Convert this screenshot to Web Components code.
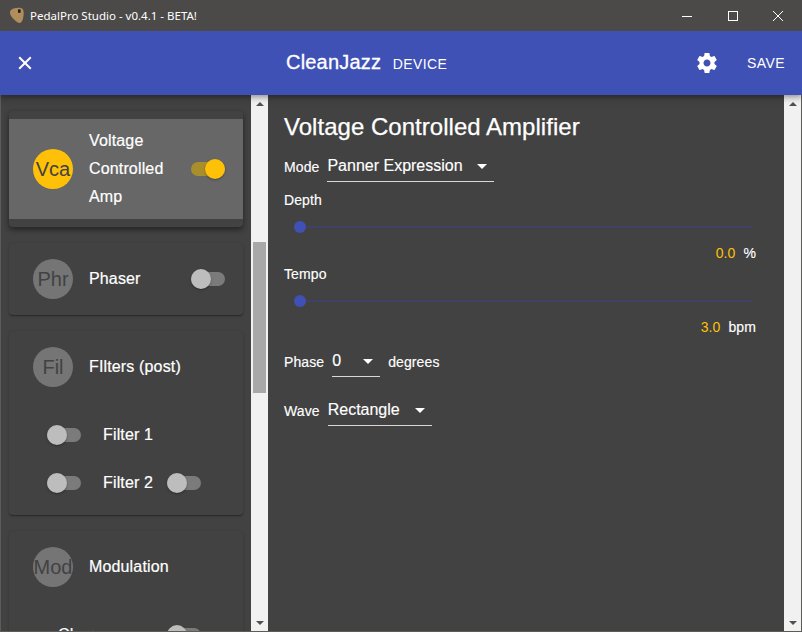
<!DOCTYPE html>
<html>
<head>
<meta charset="utf-8">
<title>PedalPro Studio</title>
<style>
    html, body { margin: 0; height: 100%; background: #424242; overflow: hidden; }
    body { font-family: "Liberation Sans", Arial, sans-serif; }
</style>
</head>
<body>
<app-window>
    <title-bar slot="title">PedalPro Studio - v0.4.1 - BETA!</title-bar>
    <app-bar slot="bar" name="CleanJazz" sub="DEVICE"></app-bar>
    <side-list slot="side">
        <effect-card>
            <effect-row code="Vca" active>Voltage Controlled Amp</effect-row>
        </effect-card>
        <effect-card>
            <effect-row code="Phr" switch>Phaser</effect-row>
        </effect-card>
        <effect-card>
            <effect-row code="Fil">FIlters (post)</effect-row>
            <sub-row>Filter 1</sub-row>
            <sub-row second>Filter 2</sub-row>
        </effect-card>
        <effect-card>
            <effect-row code="Mod">Modulation</effect-row>
            <sub-row plain>Chorus</sub-row>
        </effect-card>
    </side-list>
    <detail-panel slot="main">
        <h-title>Voltage Controlled Amplifier</h-title>
        <form-row label="Mode" value="Panner Expression" width="167" gap="8" top="8"></form-row>
        <param-slider label="Depth" value="0.0" unit="%" top="8"></param-slider>
        <param-slider label="Tempo" value="3.0" unit="bpm" top="0"></param-slider>
        <form-row label="Phase" value="0" width="48" gap="8" top="8" after="degrees"></form-row>
        <form-row label="Wave" value="Rectangle" width="104" gap="8" top="18"></form-row>
    </detail-panel>
</app-window>

<script>
function shadow(el, html) {
    el.attachShadow({mode: "open"}).innerHTML = html;
}

class AppWindow extends HTMLElement {
    connectedCallback() {
        shadow(this, `
            <style>
                :host { display: grid; grid-template-rows: 30px 64px 1fr; height: 632px; box-sizing: border-box; border: 1px solid #5c5c5a; position: relative; }
                .body { display: flex; min-height: 0; }
                .side { display: flex; width: 267px; flex: none; min-height: 0; overflow: hidden; }
                .main { display: flex; flex: 1; min-width: 0; }
                ::slotted([slot=title]), ::slotted([slot=bar]) { margin: 0 -1px; }
                ::slotted([slot=title]) { margin-top: -1px; }
            </style>
            <slot name="title"></slot>
            <slot name="bar"></slot>
            <div class="body">
                <div class="side"><slot name="side"></slot><scroll-bar thumb-top="147" thumb-height="151"></scroll-bar></div>
                <div class="main"><slot name="main"></slot><scroll-bar></scroll-bar></div>
            </div>
        `);
    }
}

class TitleBar extends HTMLElement {
    connectedCallback() {
        shadow(this, `
            <style>
                :host { display: flex; align-items: center; background: #4b4a48; color: #fff; font: 11.5px "Noto Sans", "Open Sans", sans-serif; padding-right: 1px; position: relative; z-index: 2; }
                .logo { width: 16px; height: 17px; margin: 0 5px 0 9px; flex: none; }
                .text { flex: 1; white-space: nowrap; }
                .btn { width: 45.5px; height: 31px; display: flex; align-items: center; justify-content: center; flex: none; }
                svg { display: block; }
            </style>
            <svg class="logo" viewBox="0 0 16 17">
                <path d="M2.6 2.6C5 .8 11 0 13.4 1.8 15.2 3.4 15 9 13.6 13 12.6 15.6 11 16.6 9.4 15.8 6 14 1.4 9.6 1 6 .9 4.6 1.5 3.4 2.6 2.6Z" fill="#b08d5c"/>
                <rect x="9" y="2.4" width="2.6" height="3.4" fill="#1c1c1c"/>
            </svg>
            <span class="text"><slot></slot></span>
            <span class="btn"><svg width="10" height="10" viewBox="0 0 10 10"><path d="M0 5.5H10" stroke="#fff" fill="none"/></svg></span>
            <span class="btn"><svg width="10" height="10" viewBox="0 0 10 10"><rect x=".5" y=".5" width="9" height="9" stroke="#fff" fill="none"/></svg></span>
            <span class="btn"><svg width="10" height="10" viewBox="0 0 10 10"><path d="M0 0L10 10M10 0L0 10" stroke="#fff" stroke-width="1" fill="none"/></svg></span>
        `);
    }
}

class AppBar extends HTMLElement {
    connectedCallback() {
        shadow(this, `
            <style>
                :host { display: flex; align-items: center; background: #3f51b5; color: #fff; padding: 0 17px; position: relative; z-index: 1; box-shadow: 0 2px 4px -1px rgba(0,0,0,.2), 0 4px 5px rgba(0,0,0,.14), 0 1px 10px rgba(0,0,0,.12); }
                svg { display: block; flex: none; }
                .title { position: absolute; left: 286px; top: 20px; display: flex; align-items: baseline; white-space: nowrap; }
                .name { font-size: 20px; font-weight: 500; letter-spacing: .2px; -webkit-text-stroke: .3px #fff; }
                .sub { font-size: 14px; margin-left: 11.6px; letter-spacing: .4px; }
                .right { margin-left: auto; display: flex; align-items: center; }
                .save { font-size: 14px; margin-left: 28px; letter-spacing: .4px; }
            </style>
            <svg width="16" height="16" viewBox="0 0 16 16"><path d="M2.2 2.2L13.8 13.8M13.8 2.2L2.2 13.8" stroke="#fff" stroke-width="2" fill="none"/></svg>
            <div class="title"><span class="name">${this.getAttribute("name")}</span><span class="sub">${this.getAttribute("sub")}</span></div>
            <div class="right">
                <svg width="24" height="24" viewBox="0 0 24 24"><path fill="#fff" d="M19.43 12.98c.04-.32.07-.64.07-.98s-.03-.66-.07-.98l2.11-1.65c.19-.15.24-.42.12-.64l-2-3.46c-.12-.22-.39-.3-.61-.22l-2.49 1c-.52-.4-1.08-.73-1.69-.98l-.38-2.65C14.46 2.18 14.25 2 14 2h-4c-.25 0-.46.18-.49.42l-.38 2.65c-.61.25-1.17.59-1.69.98l-2.49-1c-.23-.09-.49 0-.61.22l-2 3.46c-.13.22-.07.49.12.64l2.11 1.65c-.04.32-.07.65-.07.98s.03.66.07.98l-2.11 1.65c-.19.15-.24.42-.12.64l2 3.46c.12.22.39.3.61.22l2.49-1c.52.4 1.08.73 1.69.98l.38 2.65c.03.24.24.42.49.42h4c.25 0 .46-.18.49-.42l.38-2.65c.61-.25 1.17-.59 1.69-.98l2.49 1c.23.09.49 0 .61-.22l2-3.46c.12-.22.07-.49-.12-.64l-2.11-1.65zM12 15.5c-1.93 0-3.5-1.57-3.5-3.5s1.57-3.5 3.5-3.5 3.5 1.57 3.5 3.5-1.57 3.5-3.5 3.5z"/></svg>
                <span class="save">SAVE</span>
            </div>
        `);
    }
}

class ScrollBar extends HTMLElement {
    connectedCallback() {
        const top = this.getAttribute("thumb-top");
        const height = this.getAttribute("thumb-height");
        shadow(this, `
            <style>
                :host { display: flex; flex-direction: column; width: 17px; flex: none; background: #f1f1f1; position: relative; justify-content: space-between; }
                .arrow { height: 17px; display: flex; align-items: center; justify-content: center; }
                .arrow i { display: block; width: 0; height: 0; border-left: 4px solid transparent; border-right: 4px solid transparent; }
                .up i { border-bottom: 4px solid #505050; }
                .down i { border-top: 4px solid #505050; }
                .thumb { position: absolute; left: 2px; right: 2px; background: #a8a8a8; }
            </style>
            <div class="arrow up"><i></i></div>
            ${top ? `<div class="thumb" style="top:${top}px;height:${height}px"></div>` : ""}
            <div class="arrow down"><i></i></div>
        `);
    }
}

class SideList extends HTMLElement {
    connectedCallback() {
        shadow(this, `
            <style>
                :host { display: flex; flex-direction: column; gap: 16px; flex: 1; min-width: 0; padding: 16px 8px 0 8px; box-sizing: border-box; background: #424242; overflow: hidden; }
            </style>
            <slot></slot>
        `);
    }
}

class EffectCard extends HTMLElement {
    connectedCallback() {
        shadow(this, `
            <style>
                :host { display: block; flex: none; padding: 8px 0; border-radius: 4px; background: #424242; box-shadow: 0 1px 3px rgba(0,0,0,.2), 0 1px 1px rgba(0,0,0,.14), 0 2px 1px -1px rgba(0,0,0,.12); }
                :host(:first-child) { box-shadow: 0 3px 5px rgba(0,0,0,.3), 0 2px 6px rgba(0,0,0,.2); }
            </style>
            <slot></slot>
        `);
    }
}

class ToggleSwitch extends HTMLElement {
    connectedCallback() {
        const on = this.hasAttribute("on");
        shadow(this, `
            <style>
                :host { display: block; width: 34px; height: 20px; flex: none; position: relative; }
                .track { position: absolute; left: 0; right: 0; top: 3px; height: 14px; border-radius: 7px; background: ${on ? "#a98f2c" : "#7b7b7b"}; }
                .thumb { position: absolute; top: 0; width: 20px; height: 20px; border-radius: 50%; ${on ? "right: 0; background: #ffc107;" : "left: 0; background: #bdbdbd;"} box-shadow: 0 1px 3px rgba(0,0,0,.2), 0 1px 1px rgba(0,0,0,.14); }
            </style>
            <div class="track"></div><div class="thumb"></div>
        `);
    }
}

class EffectRow extends HTMLElement {
    connectedCallback() {
        const active = this.hasAttribute("active");
        const hasSwitch = active || this.hasAttribute("switch");
        shadow(this, `
            <style>
                :host { display: flex; align-items: center; min-height: 56px; box-sizing: border-box; padding: 8px 18px 8px 24px; color: #fff; font-size: 16px; line-height: 28px; letter-spacing: .15px; -webkit-text-stroke: .2px #fff; }
                :host([active]) { background: #676767; }
                .avatar { width: 40px; height: 40px; border-radius: 50%; flex: none; overflow: hidden; display: flex; align-items: center; justify-content: center; font-size: 20px; letter-spacing: 0; color: #424242; -webkit-text-stroke: 0; background: ${active ? "#ffc107" : "#757575"}; }
                .text { padding: 0 16px; flex: 1; min-width: 0; }
            </style>
            <div class="avatar">${this.getAttribute("code")}</div>
            <div class="text"><slot></slot></div>
            ${hasSwitch ? `<toggle-switch ${active ? "on" : ""}></toggle-switch>` : ""}
        `);
    }
}

class SubRow extends HTMLElement {
    connectedCallback() {
        const plain = this.hasAttribute("plain");
        const second = this.hasAttribute("second");
        shadow(this, `
            <style>
                :host { display: flex; align-items: center; height: 48px; box-sizing: border-box; padding-left: ${plain ? 158 : 38}px; color: #fff; font-size: 16px; letter-spacing: .15px; -webkit-text-stroke: .2px #fff; position: relative; }
                .label { margin-left: 22px; width: ${second ? "64px" : "auto"}; white-space: nowrap; }
                .plain { position: absolute; left: 49px; }
            </style>
            ${plain
                ? `<span class="plain"><slot></slot></span><toggle-switch></toggle-switch>`
                : `<toggle-switch></toggle-switch><span class="label"><slot></slot></span>${second ? `<toggle-switch></toggle-switch>` : ""}`}
        `);
        if (this.previousElementSibling?.tagName === "EFFECT-ROW") this.style.marginTop = "16px";
    }
}

class DetailPanel extends HTMLElement {
    connectedCallback() {
        shadow(this, `
            <style>
                :host { display: block; flex: 1; min-width: 0; padding: 16px 28px 0 16px; box-sizing: border-box; background: #424242; color: #fff; font-size: 14px; letter-spacing: .1px; -webkit-text-stroke: .15px #fff; }
            </style>
            <slot></slot>
        `);
    }
}

class HTitle extends HTMLElement {
    connectedCallback() {
        shadow(this, `
            <style>
                :host { display: block; font-size: 24px; line-height: 32px; letter-spacing: .03px; white-space: nowrap; -webkit-text-stroke: .25px #fff; }
            </style>
            <slot></slot>
        `);
    }
}

class FormRow extends HTMLElement {
    connectedCallback() {
        const after = this.getAttribute("after");
        shadow(this, `
            <style>
                :host { display: flex; align-items: center; height: 31px; margin-top: ${this.getAttribute("top")}px; white-space: nowrap; }
                .select { width: ${this.getAttribute("width")}px; height: 31px; margin-left: ${this.getAttribute("gap")}px; box-sizing: border-box; border-bottom: 1px solid #d9d9d9; display: flex; align-items: center; font-size: 16px; letter-spacing: 0; position: relative; }
                .arrow { position: absolute; right: 7px; top: 13px; width: 0; height: 0; border-left: 5px solid transparent; border-right: 5px solid transparent; border-top: 5px solid #fff; }
                .after { margin-left: 8px; }
            </style>
            <span>${this.getAttribute("label")}</span>
            <div class="select"><span>${this.getAttribute("value")}</span><i class="arrow"></i></div>
            ${after ? `<span class="after">${after}</span>` : ""}
        `);
    }
}

class ParamSlider extends HTMLElement {
    connectedCallback() {
        shadow(this, `
            <style>
                :host { display: block; height: 74px; box-sizing: border-box; margin-top: ${this.getAttribute("top")}px; }
                .label { line-height: 18px; padding-top: 1px; }
                .track { height: 2px; margin: 17px 4px 0 16px; background: #3d4366; position: relative; }
                .thumb { position: absolute; left: -6px; top: -5px; width: 12px; height: 12px; border-radius: 50%; background: #3f51b5; }
                .value { display: flex; justify-content: flex-end; gap: 8px; margin-top: 16px; line-height: 18px; }
                .num { color: #ffc107; -webkit-text-stroke: 0; }
            </style>
            <div class="label">${this.getAttribute("label")}</div>
            <div class="track"><div class="thumb"></div></div>
            <div class="value"><span class="num">${this.getAttribute("value")}</span><span>${this.getAttribute("unit")}</span></div>
        `);
    }
}

customElements.define("app-window", AppWindow);
customElements.define("title-bar", TitleBar);
customElements.define("app-bar", AppBar);
customElements.define("scroll-bar", ScrollBar);
customElements.define("side-list", SideList);
customElements.define("effect-card", EffectCard);
customElements.define("toggle-switch", ToggleSwitch);
customElements.define("effect-row", EffectRow);
customElements.define("sub-row", SubRow);
customElements.define("detail-panel", DetailPanel);
customElements.define("h-title", HTitle);
customElements.define("form-row", FormRow);
customElements.define("param-slider", ParamSlider);
</script>
</body>
</html>
